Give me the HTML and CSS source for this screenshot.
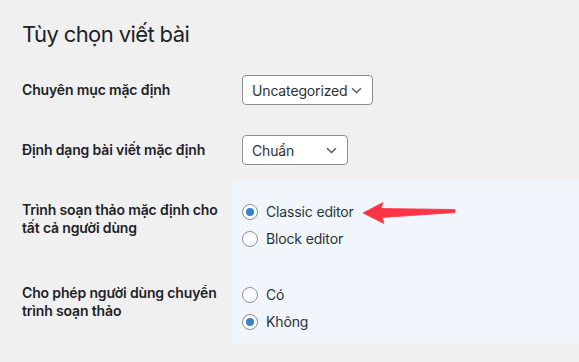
FILE: index.html
```html
<!DOCTYPE html>
<html lang="vi">
<head>
  <meta charset="UTF-8">
  <meta name="viewport" content="width=device-width, initial-scale=1.0">
  <title>Tùy chọn viết bài</title>
  <link rel="stylesheet" href="styles.css">
</head>
<body>
  <div class="wrap">
    <h1>Tùy chọn viết bài</h1>

    <div class="form-table">
      <div class="row">
        <div class="th">Chuyên mục mặc định</div>
        <div class="td">
          <div class="select wide">
            <span>Uncategorized</span>
            <svg class="chev" width="11" height="7" viewBox="0 0 11 7"><path d="M1 1.2l4.5 4.3L10 1.2" fill="none" stroke="#50575e" stroke-width="1.3"/></svg>
          </div>
        </div>
      </div>

      <div class="row">
        <div class="th">Định dạng bài viết mặc định</div>
        <div class="td">
          <div class="select short">
            <span>Chuẩn</span>
            <svg class="chev" width="11" height="7" viewBox="0 0 11 7"><path d="M1 1.2l4.5 4.3L10 1.2" fill="none" stroke="#50575e" stroke-width="1.3"/></svg>
          </div>
        </div>
      </div>

      <div class="row hl">
        <div class="th">Trình soạn thảo mặc định cho tất cả người dùng</div>
        <div class="td">
          <label class="radio"><input type="radio" name="editor" checked>Classic editor</label>
          <label class="radio"><input type="radio" name="editor">Block editor</label>
        </div>
      </div>

      <div class="row hl last">
        <div class="th">Cho phép người dùng chuyển trình soạn thảo</div>
        <div class="td">
          <label class="radio"><input type="radio" name="switch">Có</label>
          <label class="radio"><input type="radio" name="switch" checked>Không</label>
        </div>
      </div>
    </div>

    <!-- red arrow pointing at Classic editor -->
    <svg class="arrow" width="100" height="30" viewBox="0 0 100 30">
      <polygon points="3,15 23,4.5 21,10.5 95,11.5 95,14.5 22,19.5 24,25.5" fill="#fd3346" stroke="#fd3346" stroke-width="0.8" stroke-linejoin="round"/>
    </svg>
  </div>
</body>
</html>
```

FILE: styles.css
```css
body {
  margin: 0;
  background: #f0f0f1;
  font-family: Inter, "Noto Sans", sans-serif;
  font-size: 14px;
  letter-spacing: -0.15px;
  color: #1d2327;
}
.wrap {
  position: relative;
  padding-left: 22px;
  height: 362px;
  overflow: hidden;
}
h1 {
  font-size: 22px;
  font-weight: 400;
  letter-spacing: -0.6px;
  line-height: 30px;
  margin: 19px 0 11px;
}
.row {
  display: flex;
}
.th {
  width: 200px;
  padding: 21px 10px 0 0;
  font-weight: 600;
  line-height: 18px;
}
.td {
  flex: 1;
  padding: 15px 10px;
}
.hl .td {
  background: #f0f6fc;
  padding: 18px 10px 11px;
}
.hl.last .td {
  padding-bottom: 9px;
}
.select {
  display: flex;
  align-items: center;
  justify-content: space-between;
  box-sizing: border-box;
  height: 30px;
  padding: 0 10px 0 9px;
  border: 1px solid #8c8f94;
  border-radius: 4px;
  background: #fff;
  color: #2c3338;
}
.select.wide { width: 131px; }
.select.short { width: 106px; }
.radio {
  display: flex;
  align-items: center;
  gap: 8px;
  height: 27px;
  color: #2c3338;
}
.radio input {
  appearance: none;
  display: grid;
  place-items: center;
  width: 16px;
  height: 16px;
  margin: 0;
  border: 1px solid #8c8f94;
  border-radius: 50%;
  background: #fff;
}
.radio input:checked::before {
  content: "";
  width: 8px;
  height: 8px;
  border-radius: 50%;
  background: #3582c4;
}
.arrow {
  position: absolute;
  left: 360px;
  top: 198px;
}
```
